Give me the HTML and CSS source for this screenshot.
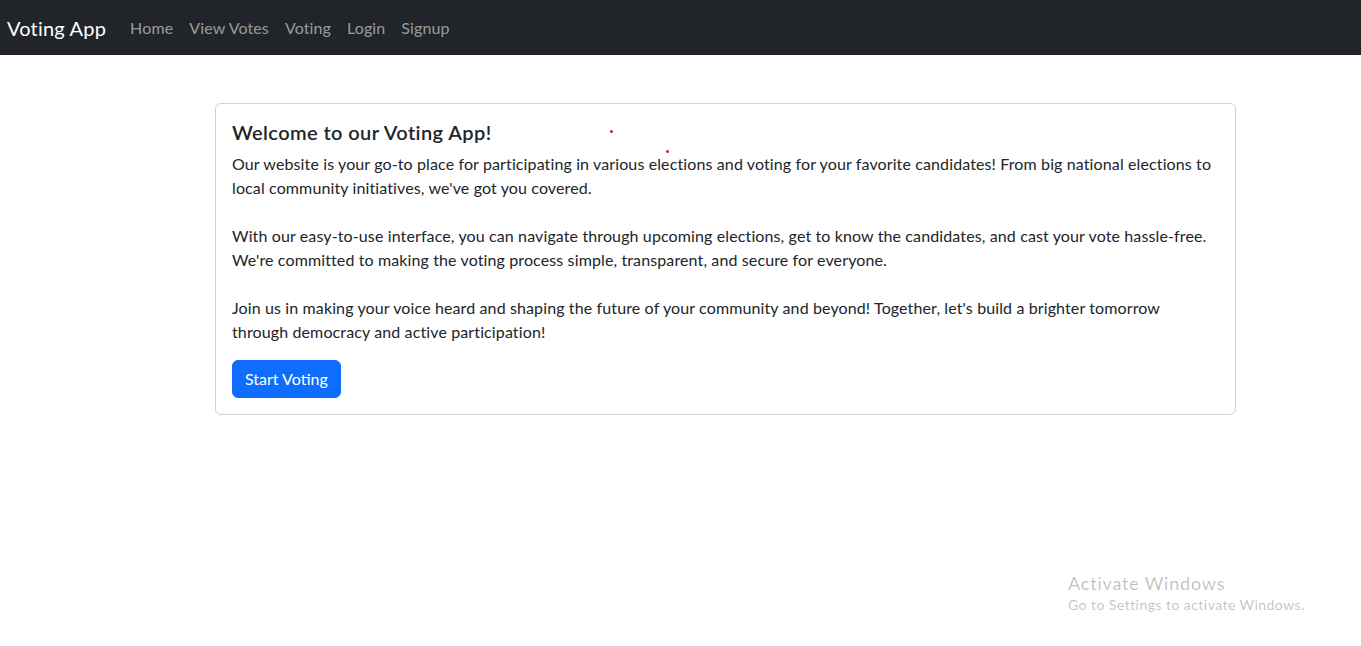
FILE: index.html
```html
<!DOCTYPE html>
<html lang="en">
<head>
<meta charset="utf-8">
<title>Voting App</title>
<link rel="stylesheet" href="styles.css">
</head>
<body>
<nav class="navbar">
  <a class="brand" href="#">Voting App</a>
  <ul class="nav">
    <li><a href="#">Home</a></li>
    <li><a href="#">View Votes</a></li>
    <li><a href="#">Voting</a></li>
    <li><a href="#">Login</a></li>
    <li><a href="#">Signup</a></li>
  </ul>
</nav>
<main class="page">
  <section class="card">
    <h5 class="card-title">Welcome to our Voting App!</h5>
    <p class="card-text">Our website is your go-to place for participating in various elections and voting for your favorite candidates! From big national elections to local community initiatives, we've got you covered.<br><br>With our easy-to-use interface, you can navigate through upcoming elections, get to know the candidates, and cast your vote hassle-free. We're committed to making the voting process simple, transparent, and secure for everyone.<br><br>Join us in making your voice heard and shaping the future of your community and beyond! Together, let's build a brighter tomorrow through democracy and active participation!</p>
    <a class="btn" href="#">Start Voting</a>
  </section>
</main>
<span class="dot dot-a"></span>
<span class="dot dot-b"></span>
<div class="watermark">
  <div class="wm-title">Activate Windows</div>
  <div class="wm-sub">Go to Settings to activate Windows.</div>
</div>
</body>
</html>
```
FILE: styles.css
```css
* { box-sizing: border-box; }
html, body { margin: 0; padding: 0; }
body {
  font-family: "Segoe UI", Lato, "Noto Sans", sans-serif;
  font-size: 16px;
  line-height: 1.5;
  letter-spacing: 0.12px;
  color: #212529;
  background: #fff;
  min-height: 646px;
}
a { text-decoration: none; }
.navbar {
  display: flex;
  align-items: center;
  height: 55px;
  background: #212529;
  padding: 0 7px;
}
.brand {
  color: #fff;
  font-size: 20px;
  line-height: 30px;
  margin-right: 16px;
  letter-spacing: 0.2px;
}
.nav {
  display: flex;
  list-style: none;
  margin: 0;
  padding: 0;
}
.nav a {
  display: block;
  padding: 8px;
  color: rgba(255,255,255,0.55);
  font-size: 16px;
  line-height: 24px;
}
.page {
  padding: 48px 0 0 215px;
}
.card {
  width: 1021px;
  border: 1px solid rgba(0,0,0,0.175);
  border-radius: 6px;
  padding: 16px;
}
.card-title {
  margin: 0 0 8px;
  font-size: 20px;
  font-weight: 600;
  line-height: 1.2;
  letter-spacing: 0.4px;
}
.card-text {
  margin: 0 0 16px;
}
.btn {
  display: inline-block;
  background: #0d6efd;
  color: #fff;
  border-radius: 6px;
  padding: 6px 12px;
  font-size: 16px;
  line-height: 24px;
  border: 1px solid #0d6efd;
  letter-spacing: 0;
}
.dot {
  position: absolute;
  width: 3px;
  height: 3px;
  border-radius: 50%;
  background: #e8112d;
}
.dot-a { left: 610px; top: 130px; }
.dot-b { left: 666px; top: 150px; }
.watermark {
  position: absolute;
  left: 1068px;
  top: 571px;
  color: rgba(0,0,0,0.25);
  font-family: "Segoe UI", Lato, sans-serif;
}
.wm-title { font-size: 18px; line-height: 24px; letter-spacing: 0.8px; }
.wm-sub { font-size: 14px; line-height: 20px; letter-spacing: 0.45px; }
```
